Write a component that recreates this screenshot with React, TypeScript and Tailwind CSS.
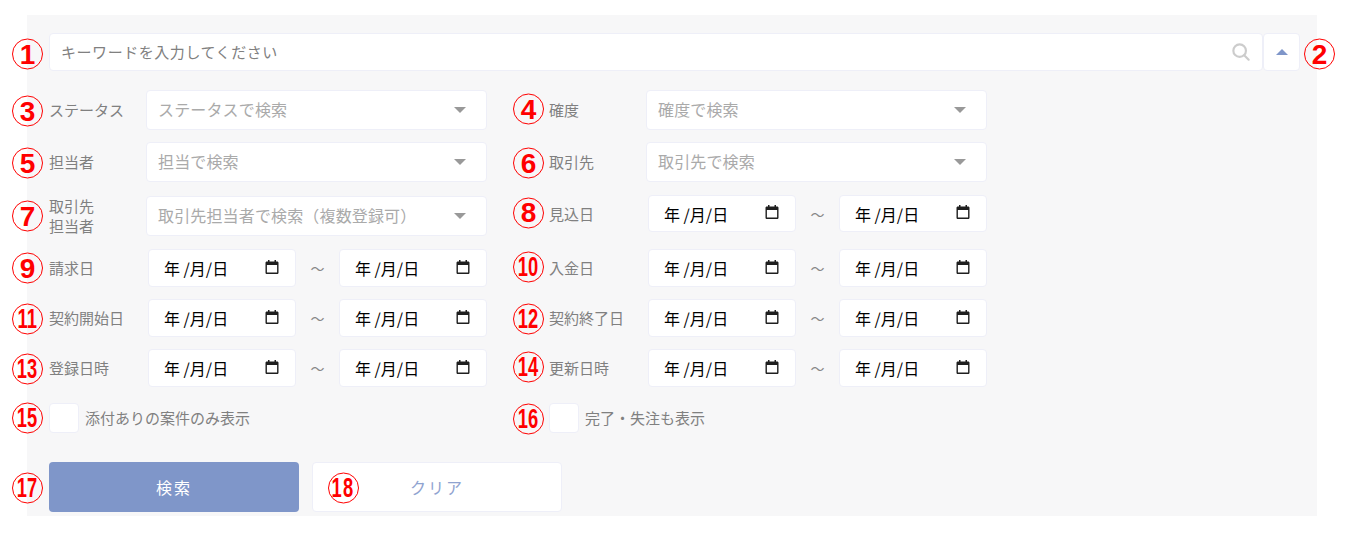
import React from 'react';

const jp = "font-['Noto_Sans_CJK_JP',sans-serif]";

const shifts: Record<number, string> = { [-1]: '-mt-px', 0: '', 1: 'mt-px', 2: 'mt-[2px]' };

// red numbered annotation sitting over the form
const Marker: React.FC<{ n: number; className: string; dy?: number }> = ({ n, className, dy = 0 }) => (
  <span
    className={`absolute flex h-[31px] w-[31px] items-center justify-center rounded-full border border-[#f00] font-['Liberation_Sans',sans-serif] font-bold text-[#f00] top-1/2 -translate-y-1/2 ${
      n > 9 ? 'text-[27px]' : 'text-[28px]'
    } ${shifts[dy]} ${className}`}
  >
    <span className={n > 9 ? 'inline-block scale-x-[0.68]' : 'inline-block'}>{n}</span>
  </span>
);

const Caret = () => (
  <span className="h-0 w-0 border-x-[6px] border-t-[6px] border-x-transparent border-t-[#999]" />
);

const SelectBox: React.FC<{ text: string }> = ({ text }) => (
  <div className="flex h-10 w-[341px] items-center justify-between rounded border border-[#eeeff8] bg-white pl-[11px] pr-5">
    <span className="-mt-[2px] text-base tracking-[0.15px] text-[#aaa]">{text}</span>
    <Caret />
  </div>
);

const CalendarIcon = () => (
  <svg width="14" height="14" viewBox="0 0 14 14" className="mb-[3px]">
    <path
      fill="#1f1f1f"
      d="M3 0h1.5v1.5h5V0H11v1.5h1.2c.7 0 1.3.6 1.3 1.3v9.9c0 .7-.6 1.3-1.3 1.3H1.8c-.7 0-1.3-.6-1.3-1.3V2.8c0-.7.6-1.3 1.3-1.3H3V0zM1.9 5v7.6h10.2V5H1.9z"
    />
  </svg>
);

const DateBox: React.FC<{ short?: boolean }> = ({ short }) => (
  <div
    className={`flex w-[148px] items-center justify-between rounded border border-[#eeeff8] bg-white pl-[15px] pr-[16px] ${
      short ? 'h-[37px]' : 'h-[38px]'
    }`}
  >
    <span className="whitespace-pre text-base leading-none text-black">年 /月/日</span>
    <CalendarIcon />
  </div>
);

const DateRange: React.FC<{ short?: boolean }> = ({ short }) => (
  <div className="ml-[2px] flex w-[339px] items-center justify-between">
    <DateBox short={short} />
    <span className="text-sm text-[#888]">～</span>
    <DateBox short={short} />
  </div>
);

const Field: React.FC<{
  n: number;
  dy?: number;
  side: string;
  label: React.ReactNode;
  children: React.ReactNode;
}> = ({ n, dy, side, label, children }) => (
  <div className="relative flex items-center">
    <Marker n={n} dy={dy} className={side} />
    <div className="w-[97px] shrink-0 text-[15px] leading-5 text-[#808080]">{label}</div>
    {children}
  </div>
);

const Check: React.FC<{ n: number; dy?: number; side: string; text: string }> = ({ n, dy, side, text }) => (
  <div className="relative flex items-center">
    <Marker n={n} dy={dy} className={side} />
    <span className="h-[30px] w-[30px] rounded border border-[#eeeff8] bg-white" />
    <span className="ml-[6px] text-[15px] text-[#808080]">{text}</span>
  </div>
);

const Row: React.FC<{ className: string; children: React.ReactNode }> = ({ className, children }) => (
  <div className={`grid grid-cols-[500px_500px] items-start ${className}`}>{children}</div>
);

export default function App() {
  const left = '-left-[37px]';
  const right = '-left-[36px]';

  return (
    <div className={`h-[537px] bg-white pl-[27px] pt-[15px] ${jp}`}>
      <div className="h-[501px] w-[1290px] bg-[#f7f7f8] pl-[22px] pt-[18px]">
        <div className="relative flex h-[38px] w-[1251px]">
          <Marker n={1} dy={2} className={left} />
          <div className="flex flex-1 items-center justify-between rounded border border-[#eeeff8] bg-white pl-[11px] pr-[12px]">
            <span className="text-[15px] tracking-[0.55px] text-[#808080]">キーワードを入力してください</span>
            <svg width="18" height="18" viewBox="0 0 20 20" fill="none" stroke="#ccc" strokeWidth="2.4">
              <circle cx="8.5" cy="8.5" r="7" />
              <path d="M13.5 13.5l5 5" strokeLinecap="round" />
            </svg>
          </div>
          <div className="flex w-[37px] items-center justify-center rounded border border-[#eeeff8] bg-white">
            <span className="h-0 w-0 border-x-[6px] border-b-[6px] border-x-transparent border-b-[#7f96c9]" />
          </div>
          <Marker n={2} dy={2} className="-right-[35px]" />
        </div>

        <Row className="mt-[19px]">
          <Field n={3} dy={1} side={left} label="ステータス"><SelectBox text="ステータスで検索" /></Field>
          <Field n={4} dy={-1} side={right} label="確度"><SelectBox text="確度で検索" /></Field>
        </Row>
        <Row className="mt-3">
          <Field n={5} dy={1} side={left} label="担当者"><SelectBox text="担当で検索" /></Field>
          <Field n={6} dy={1} side={right} label="取引先"><SelectBox text="取引先で検索" /></Field>
        </Row>
        <Row className="mt-[14px]">
          <Field n={7} side={left} label={<>取引先<br />担当者</>}><SelectBox text="取引先担当者で検索（複数登録可）" /></Field>
          <div className="-mt-px"><Field n={8} dy={-1} side={right} label="見込日"><DateRange short /></Field></div>
        </Row>
        <Row className="mt-[13px]">
          <Field n={9} side={left} label="請求日"><DateRange /></Field>
          <Field n={10} dy={-1} side={right} label="入金日"><DateRange /></Field>
        </Row>
        <Row className="mt-3">
          <Field n={11} dy={1} side={left} label="契約開始日"><DateRange /></Field>
          <Field n={12} dy={1} side={right} label="契約終了日"><DateRange /></Field>
        </Row>
        <Row className="mt-3">
          <Field n={13} dy={1} side={left} label="登録日時"><DateRange /></Field>
          <Field n={14} dy={-1} side={right} label="更新日時"><DateRange /></Field>
        </Row>
        <Row className="mt-4">
          <Check n={15} side={left} text="添付ありの案件のみ表示" />
          <Check n={16} dy={1} side={right} text="完了・失注も表示" />
        </Row>

        <div className="relative mt-[29px] flex gap-[13px]">
          <Marker n={17} dy={1} className={left} />
          <button className="h-[50px] w-[250px] rounded bg-[#7f96c9] text-base tracking-[2px] text-white">検索</button>
          <button className="relative h-[50px] w-[250px] rounded border border-[#eeeff8] bg-white text-base tracking-[2px] text-[#8fa3d0]">
            <Marker n={18} dy={1} className="left-[15px]" />
            クリア
          </button>
        </div>
      </div>
    </div>
  );
}
